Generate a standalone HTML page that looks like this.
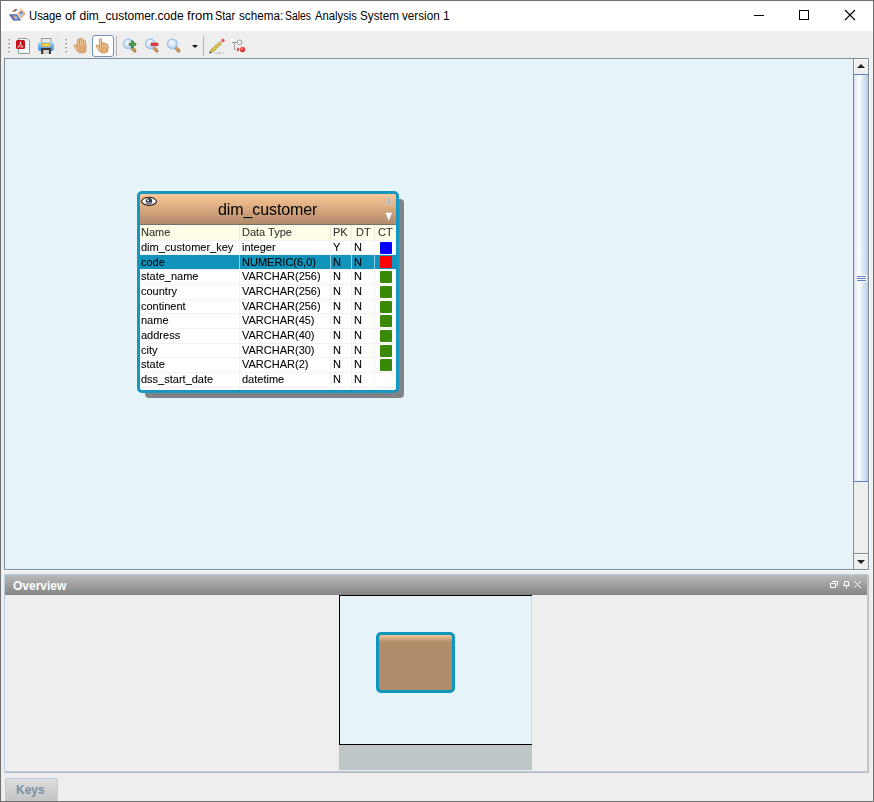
<!DOCTYPE html>
<html><head><meta charset="utf-8">
<style>
*{margin:0;padding:0;box-sizing:border-box}
html,body{width:874px;height:802px;overflow:hidden;background:#eeeeee;font-family:"Liberation Sans",sans-serif;position:relative}
.a{position:absolute}
.t{white-space:nowrap;line-height:14px}
.g{will-change:transform;-webkit-text-stroke:0.08px currentColor}
</style></head>
<body>
<!-- title bar -->
<div class="a" style="left:1px;top:1px;width:872px;height:30px;background:#fff"></div>
<svg class="a" style="left:0;top:0" width="30" height="30" viewBox="0 0 30 30">
  <defs>
    <linearGradient id="og" x1="0" y1="0" x2="1" y2="0"><stop offset="0" stop-color="#f5b070"/><stop offset="0.5" stop-color="#fbe0c0"/><stop offset="1" stop-color="#e88a40"/></linearGradient>
  </defs>
  <path d="M21 7 L25.2 13.6 L21 20.6 L17.4 13.6 Z" fill="url(#og)"/>
  <path d="M21 10.5 L23 13.6 L21 17.5 L19.2 13.6 Z" fill="#5a78b8"/>
  <path d="M21 13.6 L23 13.6 L21 17.5 L19.2 13.6 Z" fill="#b8c8ec"/>
  <path d="M9 14.3 L16.8 14.3 L21 20.6 L13.2 20.6 Z" fill="#4862a2"/>
  <path d="M12 15.6 L16 15.6 L18.6 19.3 L14.6 19.3 Z" fill="#a8b8e2"/>
  <path d="M13 15.8 L15.8 15.8 L14.6 18 Z" fill="#e8843a"/>
  <path d="M14.5 9 L17.8 9 L15.6 11.5 L12.2 12 Z" fill="#5a78b8"/>
  <path d="M12.2 12 L14.5 9 L15 11.6 Z" fill="#e8843a"/>
</svg>
<div class="a t" style="left:29.16px;top:9px;font-size:12px;color:#000;transform:scaleX(0.939);transform-origin:0 0">Usage</div><div class="a t" style="left:64.90px;top:9px;font-size:12px;color:#000;transform:scaleX(1.060);transform-origin:0 0">of</div><div class="a t" style="left:79.50px;top:9px;font-size:12px;color:#000;transform:scaleX(1.000);transform-origin:0 0">dim_customer.code</div><div class="a t" style="left:186.60px;top:9px;font-size:12px;color:#000;transform:scaleX(1.091);transform-origin:0 0">from</div><div class="a t" style="left:214.89px;top:9px;font-size:12px;color:#000;transform:scaleX(0.914);transform-origin:0 0">Star</div><div class="a t" style="left:238.50px;top:9px;font-size:12px;color:#000;transform:scaleX(0.975);transform-origin:0 0">schema:</div><div class="a t" style="left:284.93px;top:9px;font-size:12px;color:#000;transform:scaleX(0.866);transform-origin:0 0">Sales</div><div class="a t" style="left:314.60px;top:9px;font-size:12px;color:#000;transform:scaleX(0.940);transform-origin:0 0">Analysis</div><div class="a t" style="left:359.62px;top:9px;font-size:12px;color:#000;transform:scaleX(0.976);transform-origin:0 0">System</div><div class="a t" style="left:401.50px;top:9px;font-size:12px;color:#000;transform:scaleX(0.974);transform-origin:0 0">version</div><div class="a t" style="left:443.00px;top:9px;font-size:12px;color:#000;transform:scaleX(1.000);transform-origin:0 0">1</div>
<div class="a" style="left:754px;top:15px;width:10px;height:1px;background:#000"></div>
<div class="a" style="left:799px;top:10px;width:10px;height:10px;border:1px solid #000"></div>
<svg class="a" style="left:844px;top:9px" width="13" height="13" viewBox="0 0 13 13"><path d="M1 1 L11 11 M11 1 L1 11" stroke="#000" stroke-width="1.1"/></svg>

<!-- toolbar -->
<div class="a" style="left:1px;top:31px;width:872px;height:27px;background:#eeeeee"></div>
<div class="a" style="left:58px;top:34px;width:1px;height:22px;background:#e6e6e6"></div>
<svg class="a" style="left:0;top:31px" width="260" height="27" viewBox="0 31 260 27">
  <!-- grips -->
  <g fill="#fff"><rect x="9.5" y="40" width="1.5" height="1.5"/><rect x="9.5" y="44" width="1.5" height="1.5"/><rect x="9.5" y="48" width="1.5" height="1.5"/><rect x="9.5" y="52" width="1.5" height="1.5"/></g><g fill="#8c8c8c"><rect x="8.5" y="39" width="1.5" height="1.5"/><rect x="8.5" y="43" width="1.5" height="1.5"/><rect x="8.5" y="47" width="1.5" height="1.5"/><rect x="8.5" y="51" width="1.5" height="1.5"/></g>
  <g fill="#fff"><rect x="66.5" y="40" width="1.5" height="1.5"/><rect x="66.5" y="44" width="1.5" height="1.5"/><rect x="66.5" y="48" width="1.5" height="1.5"/><rect x="66.5" y="52" width="1.5" height="1.5"/></g><g fill="#8c8c8c"><rect x="65.5" y="39" width="1.5" height="1.5"/><rect x="65.5" y="43" width="1.5" height="1.5"/><rect x="65.5" y="47" width="1.5" height="1.5"/><rect x="65.5" y="51" width="1.5" height="1.5"/></g>
  <!-- pdf -->
  <path d="M18.5 38.5 H27 L29.5 41 V53.5 H18.5 Z" fill="#f4f8f8" stroke="#8aa0a0"/>
  <rect x="16" y="40" width="9" height="9" rx="1.5" fill="#c8101a"/>
  <path d="M20.5 41.8 C19.8 43 20.8 44.5 22.8 46.6 C23.6 47.4 22.5 47.6 20.5 46.6 C18.5 45.8 17.5 46.8 17.8 47.3 C18.3 47.8 19.5 45.6 20.3 44 C20.9 42.8 21 41.6 20.5 41.8 Z" fill="none" stroke="#fff" stroke-width="0.8"/>
  <!-- printer -->
  <defs><linearGradient id="pb" x1="0" y1="0" x2="0" y2="1"><stop offset="0" stop-color="#a8d8f8"/><stop offset="1" stop-color="#3d8fd6"/></linearGradient></defs>
  <rect x="41.5" y="38.5" width="9.5" height="5" fill="#ececec" stroke="#9a9a9a"/>
  <rect x="38" y="42" width="16" height="9" rx="2.5" fill="url(#pb)"/>
  <rect x="42.3" y="43.3" width="7.6" height="3" fill="#f8e048" stroke="#e09a20" stroke-width="0.7"/>
  <circle cx="51.6" cy="47.2" r="0.6" fill="#e07020"/>
  <rect x="41" y="48" width="10" height="6" fill="#3c3c3c"/>
  <rect x="43.3" y="50" width="5.6" height="4" fill="#d4d4d4"/>
  <!-- hand 1 -->
  <defs><linearGradient id="hg" x1="0" y1="0" x2="1" y2="1"><stop offset="0" stop-color="#f6cf9e"/><stop offset="1" stop-color="#d9a068"/></linearGradient></defs>
  <g stroke-linecap="round" fill="none">
    <g stroke="#c08650" stroke-width="2.7"><path d="M78.2 40.5 V46 M80.5 39 V46 M82.5 40 V46 M84.6 41.8 V46 M75 46 L77.8 50"/></g>
    <path d="M77 44.5 H86 V49.5 C86 51.8 84.5 52.8 82.8 52.8 H80.6 C79 52.8 77.8 51.8 77.2 50 Z" fill="#e0ab76" stroke="#c08650" stroke-width="0.8"/>
    <g stroke="#f2c896" stroke-width="1.4"><path d="M78.2 40.5 V46 M80.5 39 V46 M82.5 40 V46 M84.6 41.8 V46 M75 46 L77.8 50"/></g>
    <path d="M77.7 45.5 H85.3 V49.5 C85.3 51.2 84.2 52 82.8 52 H80.6 C79.4 52 78.5 51.2 78 50 Z" fill="#deaa72"/>
  </g>
  <!-- selected btn -->
  <rect x="92.5" y="35.5" width="21" height="21" rx="2.5" fill="#fff" stroke="#7394b3"/>
  <g stroke-linecap="round" fill="none">
    <g stroke="#c08650" stroke-width="2.7"><path d="M100.5 39.5 V47 M102.8 43.5 V47 M105 44 V47 M107 45 V47.5 M97 45.8 L99.8 50"/></g>
    <path d="M99.2 46.2 H108 V49.5 C108 51.8 106.5 52.8 104.8 52.8 H102.6 C101 52.8 99.8 51.8 99.2 50 Z" fill="#e0ab76" stroke="#c08650" stroke-width="0.8"/>
    <g stroke="#f2c896" stroke-width="1.4"><path d="M100.5 39.5 V47 M102.8 43.5 V47 M105 44 V47 M107 45 V47.5 M97 45.8 L99.8 50"/></g>
    <path d="M99.8 47.2 H107.3 V49.5 C107.3 51.2 106.2 52 104.8 52 H102.6 C101.4 52 100.5 51.2 100 50 Z" fill="#deaa72"/>
  </g>
  <!-- separator -->
  <rect x="116" y="36" width="1" height="20" fill="#b4b4b4"/>
  <!-- zoom in -->
  <defs>
    <radialGradient id="lens" cx="0.4" cy="0.35" r="0.7"><stop offset="0" stop-color="#f4f8fe"/><stop offset="0.6" stop-color="#d2e2f6"/><stop offset="1" stop-color="#a8c6ea"/></radialGradient>
  </defs>
  <g stroke-linecap="round">
    <line x1="131.5" y1="47.5" x2="134.8" y2="50.8" stroke="#9a6a3a" stroke-width="3.2"/>
    <line x1="131.5" y1="47.5" x2="134.8" y2="50.8" stroke="#d8a060" stroke-width="1.8"/>
    <circle cx="128.3" cy="43.9" r="4.8" fill="url(#lens)" stroke="#a0c2ea" stroke-width="1.3"/>
    <path d="M131.5 41 h2 v2.3 h2.3 v2 h-2.3 v2.3 h-2 v-2.3 h-2.3 v-2 h2.3 Z" fill="#5aaa50" stroke="#2a7a2a" stroke-width="0.8"/>
    <line x1="153.5" y1="47.5" x2="156.8" y2="50.8" stroke="#9a6a3a" stroke-width="3.2"/>
    <line x1="153.5" y1="47.5" x2="156.8" y2="50.8" stroke="#d8a060" stroke-width="1.8"/>
    <circle cx="150.3" cy="43.9" r="4.8" fill="url(#lens)" stroke="#a0c2ea" stroke-width="1.3"/>
    <rect x="151" y="43" width="7" height="2.8" fill="#ee3a3a" stroke="#c02020" stroke-width="0.5"/>
    <line x1="175.5" y1="47.5" x2="178.8" y2="50.8" stroke="#9a6a3a" stroke-width="3.2"/>
    <line x1="175.5" y1="47.5" x2="178.8" y2="50.8" stroke="#d8a060" stroke-width="1.8"/>
    <circle cx="172.3" cy="43.9" r="4.8" fill="url(#lens)" stroke="#a0c2ea" stroke-width="1.3"/>
  </g>
  <!-- dropdown -->
  <path d="M192 45 H198 L195 48 Z" fill="#111"/>
  <rect x="203" y="36" width="1" height="20" fill="#b4b4b4"/>
  <!-- pencil -->
  <defs><radialGradient id="psh" cx="0.5" cy="0.5" r="0.5"><stop offset="0" stop-color="#000" stop-opacity="0.22"/><stop offset="1" stop-color="#000" stop-opacity="0"/></radialGradient>
  <radialGradient id="rc" cx="0.4" cy="0.35" r="0.6"><stop offset="0" stop-color="#ff8a8a"/><stop offset="1" stop-color="#d81818"/></radialGradient></defs>
  <ellipse cx="218.5" cy="53" rx="7" ry="1.3" fill="url(#psh)"/>
  <line x1="210.8" y1="51.8" x2="220.8" y2="42.6" stroke="#8a7a20" stroke-width="3" stroke-linecap="butt"/>
  <line x1="210.8" y1="51.8" x2="220.8" y2="42.6" stroke="#ecd44a" stroke-width="1.8" stroke-linecap="butt"/>
  <line x1="220.8" y1="42.6" x2="222" y2="41.5" stroke="#c8c8d0" stroke-width="2.6"/>
  <circle cx="223" cy="40.3" r="1.6" fill="#f04848"/>
  <path d="M209.2 53.6 L209.9 51.3 L211.4 52.8 Z" fill="#111"/>
  <!-- T connector -->
  <path d="M232 42.5 H237 M234.5 42.5 V49.5 H236" stroke="#999" stroke-width="1" fill="none"/>
  <circle cx="239.6" cy="42.3" r="2.3" fill="#fafafa" stroke="#999" stroke-width="1"/>
  <path d="M237.3 47.8 L238.8 49.4 L237.3 51" stroke="#c01828" stroke-width="1.1" fill="none"/>
  <circle cx="242.5" cy="49.4" r="2.6" fill="url(#rc)"/>
</svg>

<!-- canvas -->
<div class="a" style="left:4px;top:58px;width:865px;height:512px;border:1px solid #7b8c9b;background:#e6f4f9"></div>
<!-- vertical scrollbar -->
<div class="a" style="left:853px;top:58px;width:16px;height:512px;border:1px solid #7b8c9b;background:#eeeeee"></div>
<div class="a" style="left:854px;top:59px;width:14px;height:15px;background:#eeeeee;border-top:1px solid #fff;border-left:1px solid #fff"></div>
<svg class="a" style="left:857px;top:64px" width="9" height="5"><path d="M0 4 L4 0 L8 4 Z" fill="#222"/></svg>
<div class="a" style="left:853px;top:74px;width:15px;height:408px;border:1px solid #5f7fc4;border-right:0;background:linear-gradient(90deg,#d9e3ef 0%,#ffffff 35%,#e6eef8 55%,#b9cde6 100%)"></div>
<div class="a" style="left:856px;top:275px;width:11px;height:7px;background:#fff"></div>
<div class="a" style="left:857px;top:276px;width:9px;height:1px;background:#5f7fc4"></div>
<div class="a" style="left:857px;top:278px;width:9px;height:1px;background:#5f7fc4"></div>
<div class="a" style="left:857px;top:280px;width:9px;height:1px;background:#5f7fc4"></div>
<div class="a" style="left:853px;top:553px;width:16px;height:17px;border:1px solid #7b8c9b;background:#eeeeee"></div>
<div class="a" style="left:854px;top:554px;width:14px;height:1px;background:#fff"></div>
<svg class="a" style="left:857px;top:560px" width="9" height="5"><path d="M0 0 L8 0 L4 4 Z" fill="#222"/></svg>

<!-- table -->
<div class="a" style="left:145px;top:199px;width:259px;height:199px;border-radius:4px;background:#7f8386"></div>
<div class="a" style="left:137px;top:191px;width:262px;height:202px;border:3px solid #1597bf;border-radius:5px;background:#fff;overflow:hidden">
  <div class="a" style="left:0;top:0;width:256px;height:30px;background:linear-gradient(180deg,#f9c897 0%,#d9a97f 50%,#b08a6a 100%)"></div>
  <div class="a" style="left:0;top:30px;width:256px;height:1px;background:#737170"></div>
  <div class="a" style="left:0;top:31px;width:256px;height:15px;background:#fefde7"></div>
</div>

<div class="a" style="left:869px;top:58px;width:1px;height:513px;background:#fff"></div>
<div class="a" style="left:4px;top:570px;width:866px;height:1px;background:#fff"></div>
<div class="a" style="left:872px;top:31px;width:1px;height:770px;background:#f6f6f6"></div>
<!-- table header content -->
<svg class="a" style="left:140px;top:194px" width="20" height="14" viewBox="140 194 20 14">
  <ellipse cx="149.5" cy="203.5" rx="7" ry="3.2" fill="#000" opacity="0.10"/>
  <path d="M141.4 201.3 C144 195.9 154 195.9 156.6 201.3 C154 206.7 144 206.7 141.4 201.3 Z" fill="#fff" stroke="#2e2218" stroke-width="1.1"/>
  <circle cx="149" cy="201.3" r="3.2" fill="#34343e"/>
  <path d="M146 202 A3.2 3.2 0 0 0 152 202 Z" fill="#8c8ab4"/>
  <circle cx="148" cy="200.2" r="1" fill="#fff"/>
</svg>
<div class="a" style="left:218px;top:201px;font-size:16px;will-change:transform;letter-spacing:-0.1px;line-height:18px;white-space:nowrap;color:#000">dim_customer</div>
<svg class="a" style="left:384px;top:195px" width="10" height="28" viewBox="384 195 10 28">
  <path d="M385 204.5 L388.8 196 L392.6 204.5 Z" fill="#bcbcbc" stroke="#e0d0c0" stroke-width="0.5"/>
  <path d="M385 212.3 L392.6 212.3 L388.8 221.5 Z" fill="#fff" stroke="#9a8a7a" stroke-width="0.5"/>
</svg>
<!-- table rows -->
<div class="a" style="left:140px;top:240px;width:256px;height:1px;background:#f2f2f2"></div>
<div class="a" style="left:140px;top:254px;width:256px;height:1px;background:#f2f2f2"></div>
<div class="a" style="left:140px;top:269px;width:256px;height:1px;background:#f2f2f2"></div>
<div class="a" style="left:140px;top:284px;width:256px;height:1px;background:#f2f2f2"></div>
<div class="a" style="left:140px;top:299px;width:256px;height:1px;background:#f2f2f2"></div>
<div class="a" style="left:140px;top:313px;width:256px;height:1px;background:#f2f2f2"></div>
<div class="a" style="left:140px;top:328px;width:256px;height:1px;background:#f2f2f2"></div>
<div class="a" style="left:140px;top:343px;width:256px;height:1px;background:#f2f2f2"></div>
<div class="a" style="left:140px;top:357px;width:256px;height:1px;background:#f2f2f2"></div>
<div class="a" style="left:140px;top:372px;width:256px;height:1px;background:#f2f2f2"></div>
<div class="a" style="left:140px;top:387px;width:256px;height:1px;background:#f2f2f2"></div>
<div class="a" style="left:140px;top:255px;width:256px;height:14px;background:#1193bb"></div>
<div class="a" style="left:239px;top:225px;width:1px;height:15px;background:#ecebd6"></div>
<div class="a" style="left:239px;top:241px;width:1px;height:148px;background:#f2f2f2"></div>
<div class="a" style="left:239px;top:255px;width:1px;height:14px;background:#8fd0e4"></div>
<div class="a" style="left:330px;top:225px;width:1px;height:15px;background:#ecebd6"></div>
<div class="a" style="left:330px;top:241px;width:1px;height:148px;background:#f2f2f2"></div>
<div class="a" style="left:330px;top:255px;width:1px;height:14px;background:#8fd0e4"></div>
<div class="a" style="left:351px;top:225px;width:1px;height:15px;background:#ecebd6"></div>
<div class="a" style="left:351px;top:241px;width:1px;height:148px;background:#f2f2f2"></div>
<div class="a" style="left:351px;top:255px;width:1px;height:14px;background:#8fd0e4"></div>
<div class="a" style="left:374px;top:225px;width:1px;height:15px;background:#ecebd6"></div>
<div class="a" style="left:374px;top:241px;width:1px;height:148px;background:#f2f2f2"></div>
<div class="a" style="left:374px;top:255px;width:1px;height:14px;background:#8fd0e4"></div>
<div class="a t g" style="left:141px;top:225px;font-size:11px;color:#333">Name</div>
<div class="a t g" style="left:242px;top:225px;font-size:11px;color:#333">Data Type</div>
<div class="a t g" style="left:333px;top:225px;font-size:11px;color:#333">PK</div>
<div class="a t g" style="left:356px;top:225px;font-size:11px;color:#333">DT</div>
<div class="a t g" style="left:378px;top:225px;font-size:11px;color:#333">CT</div>
<div class="a t g" style="left:141px;top:240px;font-size:11px;color:#000">dim_customer_key</div>
<div class="a t g" style="left:242px;top:240px;font-size:11px;color:#000">integer</div>
<div class="a t g" style="left:333.4px;top:240px;font-size:11px;color:#000">Y</div>
<div class="a t g" style="left:354px;top:240px;font-size:11px;color:#000">N</div>
<div class="a" style="left:380px;top:242px;width:12px;height:12px;border-radius:1px;background:#0000ff"></div>
<div class="a t g" style="left:141px;top:255px;font-size:11px;color:#000">code</div>
<div class="a t g" style="left:242px;top:255px;font-size:11px;color:#000">NUMERIC(6,0)</div>
<div class="a t g" style="left:333.4px;top:255px;font-size:11px;color:#000">N</div>
<div class="a t g" style="left:354px;top:255px;font-size:11px;color:#000">N</div>
<div class="a" style="left:380px;top:256px;width:12px;height:12px;border-radius:1px;background:#ff0000"></div>
<div class="a t g" style="left:141px;top:269px;font-size:11px;color:#000">state_name</div>
<div class="a t g" style="left:242px;top:269px;font-size:11px;color:#000">VARCHAR(256)</div>
<div class="a t g" style="left:333.4px;top:269px;font-size:11px;color:#000">N</div>
<div class="a t g" style="left:354px;top:269px;font-size:11px;color:#000">N</div>
<div class="a" style="left:380px;top:271px;width:12px;height:12px;border-radius:1px;background:#3a8a0a"></div>
<div class="a t g" style="left:141px;top:284px;font-size:11px;color:#000">country</div>
<div class="a t g" style="left:242px;top:284px;font-size:11px;color:#000">VARCHAR(256)</div>
<div class="a t g" style="left:333.4px;top:284px;font-size:11px;color:#000">N</div>
<div class="a t g" style="left:354px;top:284px;font-size:11px;color:#000">N</div>
<div class="a" style="left:380px;top:286px;width:12px;height:12px;border-radius:1px;background:#3a8a0a"></div>
<div class="a t g" style="left:141px;top:299px;font-size:11px;color:#000">continent</div>
<div class="a t g" style="left:242px;top:299px;font-size:11px;color:#000">VARCHAR(256)</div>
<div class="a t g" style="left:333.4px;top:299px;font-size:11px;color:#000">N</div>
<div class="a t g" style="left:354px;top:299px;font-size:11px;color:#000">N</div>
<div class="a" style="left:380px;top:301px;width:12px;height:12px;border-radius:1px;background:#3a8a0a"></div>
<div class="a t g" style="left:141px;top:313px;font-size:11px;color:#000">name</div>
<div class="a t g" style="left:242px;top:313px;font-size:11px;color:#000">VARCHAR(45)</div>
<div class="a t g" style="left:333.4px;top:313px;font-size:11px;color:#000">N</div>
<div class="a t g" style="left:354px;top:313px;font-size:11px;color:#000">N</div>
<div class="a" style="left:380px;top:315px;width:12px;height:12px;border-radius:1px;background:#3a8a0a"></div>
<div class="a t g" style="left:141px;top:328px;font-size:11px;color:#000">address</div>
<div class="a t g" style="left:242px;top:328px;font-size:11px;color:#000">VARCHAR(40)</div>
<div class="a t g" style="left:333.4px;top:328px;font-size:11px;color:#000">N</div>
<div class="a t g" style="left:354px;top:328px;font-size:11px;color:#000">N</div>
<div class="a" style="left:380px;top:330px;width:12px;height:12px;border-radius:1px;background:#3a8a0a"></div>
<div class="a t g" style="left:141px;top:343px;font-size:11px;color:#000">city</div>
<div class="a t g" style="left:242px;top:343px;font-size:11px;color:#000">VARCHAR(30)</div>
<div class="a t g" style="left:333.4px;top:343px;font-size:11px;color:#000">N</div>
<div class="a t g" style="left:354px;top:343px;font-size:11px;color:#000">N</div>
<div class="a" style="left:380px;top:345px;width:12px;height:12px;border-radius:1px;background:#3a8a0a"></div>
<div class="a t g" style="left:141px;top:357px;font-size:11px;color:#000">state</div>
<div class="a t g" style="left:242px;top:357px;font-size:11px;color:#000">VARCHAR(2)</div>
<div class="a t g" style="left:333.4px;top:357px;font-size:11px;color:#000">N</div>
<div class="a t g" style="left:354px;top:357px;font-size:11px;color:#000">N</div>
<div class="a" style="left:380px;top:359px;width:12px;height:12px;border-radius:1px;background:#3a8a0a"></div>
<div class="a t g" style="left:141px;top:372px;font-size:11px;color:#000">dss_start_date</div>
<div class="a t g" style="left:242px;top:372px;font-size:11px;color:#000">datetime</div>
<div class="a t g" style="left:333.4px;top:372px;font-size:11px;color:#000">N</div>
<div class="a t g" style="left:354px;top:372px;font-size:11px;color:#000">N</div>
<!-- overview panel -->
<div class="a" style="left:5px;top:575px;width:864px;height:198px;background:#bababa"></div>
<div class="a" style="left:4px;top:574px;width:864px;height:198px;border:1px solid #b7cde3;background:#eeeeee"></div>
<div class="a" style="left:5px;top:575px;width:862px;height:20px;background:linear-gradient(180deg,#bababa,#848484)"></div>
<div class="a t" style="left:13px;top:579px;font-size:12px;font-weight:bold;color:#fff">Overview</div>
<svg class="a" style="left:828px;top:579px" width="36" height="11" viewBox="828 579 36 11">
  <path d="M832 581.5 H837.5 V586" stroke="#fff" fill="none"/>
  <rect x="830.5" y="583.5" width="5" height="4" stroke="#fff" fill="none"/>
  <path d="M844.5 585 v-3.5 h4 v3.5" stroke="#fff" fill="none"/>
  <path d="M843 585.5 h7 M846.5 585.5 v3" stroke="#fff" fill="none"/>
  <path d="M854 581 L861 588 M861 581 L854 588" stroke="#fff" fill="none"/>
</svg>
<div class="a" style="left:339px;top:595px;width:193px;height:150px;border-left:1px solid #000;border-top:1px solid #000;border-bottom:1px solid #000;background:#e6f4f9"></div>
<div class="a" style="left:339px;top:745px;width:193px;height:25px;background:#bfc6c8"></div>
<div class="a" style="left:531px;top:596px;width:1px;height:148px;background:#d2d6d6"></div>
<div class="a" style="left:376px;top:632px;width:79px;height:61px;border:3px solid #0d97bf;border-radius:5px;background:linear-gradient(180deg,#f7c696 0px,#c49c76 5px,#b08c6a 8px,#b08c6a 100%)"></div>

<!-- keys tab -->
<div class="a" style="left:5px;top:778px;width:53px;height:23px;border:1px solid #b7cde3;border-bottom:0;border-radius:3px 3px 0 0;background:linear-gradient(180deg,#dedede,#c3c3c3)"></div>
<div class="a t" style="left:16px;top:783px;font-size:12px;font-weight:bold;color:#7a8ea6">Keys</div>

<!-- window border -->
<div class="a" style="left:0;top:0;width:874px;height:802px;border:1px solid #6f6f6f;pointer-events:none"></div>
</body></html>
